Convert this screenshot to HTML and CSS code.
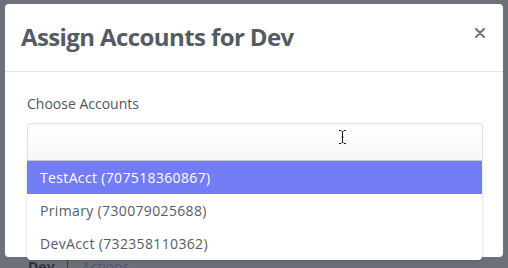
FILE: index.html
```html
<!DOCTYPE html>
<html lang="en">
<head>
    <meta charset="UTF-8">
    <meta name="viewport" content="width=device-width, initial-scale=1.0">
    <title>Assign Accounts</title>
    <link rel="stylesheet" href="styles.css">
</head>
<body>
    <div class="modal">
        <header class="modal-header">
            <h2 class="modal-title">Assign Accounts for Dev</h2>
            <button class="close-button" aria-label="Close">
                <svg width="10" height="10" viewBox="0 0 10 10">
                    <path d="M1 1 L9 9 M9 1 L1 9" stroke="#6b6f76" stroke-width="2" stroke-linecap="round"/>
                </svg>
            </button>
        </header>

        <main class="modal-body">
            <label class="field-label" for="accounts">Choose Accounts</label>
            <div class="select-wrap">
                <input type="text" id="accounts" class="select-input">
                <svg class="text-cursor" width="9" height="16" viewBox="0 0 9 16">
                    <path d="M1 1.5 H3 L4.5 3 L6 1.5 H8 M4.5 3 V13 M1 14.5 H3 L4.5 13 L6 14.5 H8 M3 8 H6" stroke="#fff" stroke-width="2.2" fill="none"/>
                    <path d="M1 1.5 H3 L4.5 3 L6 1.5 H8 M4.5 3 V13 M1 14.5 H3 L4.5 13 L6 14.5 H8 M3.5 8 H5.5" stroke="#1a1a1a" stroke-width="1" fill="none"/>
                </svg>
                <ul class="dropdown">
                    <li class="option active">TestAcct (707518360867)</li>
                    <li class="option">Primary (730079025688)</li>
                    <li class="option">DevAcct (732358110362)</li>
                </ul>
            </div>
        </main>
    </div>

    <div class="page-peek">
        <span class="peek-name">Dev</span>
        <span class="peek-link">Actions</span>
    </div>
</body>
</html>
```

FILE: styles.css
```css
/* Latar gelap di belakang modal */
body {
    margin: 0;
    font-family: 'Open Sans', 'Liberation Sans', sans-serif;
    background-color: #6c7079;
    color: #4b5563;
    overflow: hidden;
}

/* Kotak modal */
.modal {
    background-color: #FFFFFF;
    margin: 4px 5px 0;
    width: 498px;
    height: 253px;
    border-radius: 4px;
    box-sizing: border-box;
}

.modal-header {
    display: flex;
    justify-content: space-between;
    align-items: flex-start;
    padding: 18px 17px 20px 16px;
    border-bottom: 1px solid #e3e5e8;
}

.modal-title {
    margin: 0;
    font-size: 24px;
    line-height: 29px;
    font-weight: 700;
    color: #555b63;
    letter-spacing: -0.6px;
}

.close-button {
    background: none;
    border: none;
    padding: 0;
    margin-top: 5px;
    width: 12px;
    height: 12px;
    display: flex;
    align-items: center;
    justify-content: center;
    cursor: pointer;
}

.modal-body {
    padding: 22px 20px 0 22px;
}

.field-label {
    display: block;
    font-size: 14px;
    line-height: 20px;
    font-weight: 500;
    color: #4f555d;
    margin-bottom: 9px;
}

.select-wrap {
    position: relative;
}

.select-input {
    display: block;
    width: 100%;
    height: 38px;
    box-sizing: border-box;
    border: 1px solid #dcdfe4;
    border-bottom-color: #cfd2d8;
    border-radius: 4px 4px 0 0;
    background: linear-gradient(to bottom, #ffffff, #f7f7f8);
    outline: none;
}

/* Kursor mouse di atas input */
.text-cursor {
    position: absolute;
    left: 311px;
    top: 6px;
}

.dropdown {
    position: absolute;
    top: 38px;
    left: 0;
    right: 1px;
    margin: 0;
    padding: 0;
    list-style: none;
    background-color: #FFFFFF;
    border-radius: 0 0 4px 4px;
    box-shadow: 0 2px 4px rgba(0, 0, 0, 0.08), 0 0 0 1px rgba(0, 0, 0, 0.04);
    z-index: 10;
}

.option {
    height: 33px;
    line-height: 33px;
    padding: 0 13px;
    font-size: 14px;
    letter-spacing: 0.35px;
    color: #575c63;
}

.option.active {
    background-color: #727cf5;
    color: #FFFFFF;
}

/* Halaman di balik overlay */
.page-peek {
    display: flex;
    gap: 14px;
    padding: 1px 0 0 28px;
    font-size: 14px;
    line-height: 18px;
    font-weight: 700;
}

.peek-name {
    color: #2e3138;
    padding-right: 12px;
    border-right: 1px solid #3d4048;
}

.peek-link {
    color: #4e5574;
    font-weight: 400;
}
```
